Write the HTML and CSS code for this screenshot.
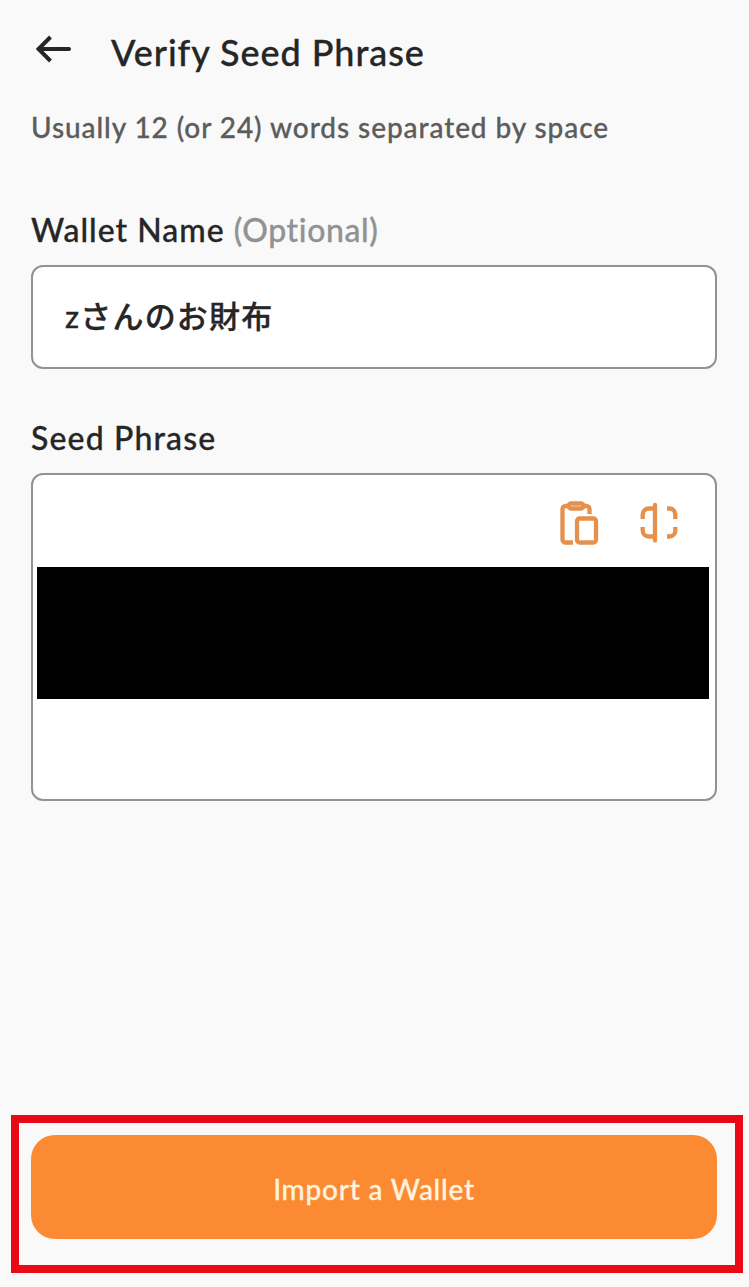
FILE: index.html
```html
<!DOCTYPE html>
<html lang="en">
<head>
  <meta charset="UTF-8">
  <title>Verify Seed Phrase</title>
  <link rel="stylesheet" href="styles.css">
</head>
<body>
  <header class="header">
    <svg class="back" width="36" height="30" viewBox="0 0 36 30">
      <path d="M33 15H3" stroke-linecap="round" />
      <path d="M14.500 3L2.500 15l12 12" />
    </svg>
    <h1 class="title">Verify Seed Phrase</h1>
  </header>
  <p class="hint">Usually 12 (or 24) words separated by space</p>

  <form class="form">
    <label class="label">Wallet Name <span class="optional">(Optional)</span></label>
    <div class="field">zさんのお財布</div>

    <label class="label seed-label">Seed Phrase</label>
    <div class="seed-box">
      <div class="tools">
        <svg class="icon" width="40" height="46" viewBox="0 0 40 46">
          <path d="M8 5H6.500a3 3 0 0 0-3 3v30.500a3 3 0 0 0 3 3H14M24 5h3.500a3 3 0 0 1 3 3v5" />
          <rect x="9.500" y="2.500" width="15" height="5" rx="2.500" />
          <rect x="18" y="17.500" width="19" height="24" rx="2.500" />
        </svg>
        <svg class="icon" width="40" height="42" viewBox="0 0 40 42">
          <path d="M17 4v35.500" stroke-linecap="round" />
          <path d="M17 7.500h-6.300a6 6 0 0 0-6 6V18M4.700 26v3.500a6 6 0 0 0 6 6H17M29 7.500h2.300a6 6 0 0 1 6 6V18M37.300 26v3.500a6 6 0 0 1-6 6H29" />
        </svg>
      </div>
      <div class="redacted"></div>
    </div>

    <div class="highlight">
      <button class="import" type="button">Import a Wallet</button>
    </div>
  </form>
</body>
</html>
```

FILE: styles.css
```css
* {
  box-sizing: border-box;
}
body {
  display: flex;
  flex-direction: column;
  height: 1287px;
  margin: 0;
  padding: 32px 32px 14px 31px;
  background-color: #f9f9f9;
  color: #262626;
  font-family: Lato, "Noto Sans CJK JP", sans-serif;
  font-weight: 500;
  -webkit-text-stroke: 0.3px;
}
.header {
  display: flex;
  align-items: center;
  height: 40px;
}
.back {
  margin: -6px 39px 0 5px;
  fill: none;
  stroke: #262626;
  stroke-width: 4;
}
.title {
  margin: 0;
  font-size: 36px;
  font-weight: 500;
  line-height: 40px;
  letter-spacing: 0.95px;
}
.hint {
  margin: 35px 0 0;
  color: #5c5c5c;
  font-size: 28px;
  line-height: 40px;
  letter-spacing: 0.92px;
}
.form {
  display: flex;
  flex: 1;
  flex-direction: column;
  margin-top: 63px;
}
.label {
  font-size: 32px;
  line-height: 40px;
  letter-spacing: 1px;
  white-space: nowrap;
}
.optional {
  color: #929292;
  letter-spacing: 0.6px;
}
.field {
  height: 104px;
  margin-top: 15px;
  padding: 0 32px;
  border: 2px solid #929292;
  border-radius: 12px;
  background: white;
  font-size: 31px;
  line-height: 98px;
  letter-spacing: 1.2px;
}
.seed-label {
  margin-top: 49px;
  letter-spacing: 1.15px;
}
.seed-box {
  height: 328px;
  margin-top: 15px;
  padding: 26px 6px 0 4px;
  border: 2px solid #929292;
  border-radius: 12px;
  background: white;
}
.tools {
  display: flex;
  justify-content: flex-end;
  gap: 39px;
  height: 66px;
  padding-right: 31px;
}
.icon {
  fill: none;
  stroke: #e5914d;
  stroke-width: 4.3;
}
.redacted {
  height: 132px;
  background: black;
}
.highlight {
  margin: auto -26px 0 -20px;
  height: 158px;
  padding: 12px 18px 0 12px;
  border: 8px solid #ea0a17;
}
.import {
  display: block;
  width: 100%;
  height: 104px;
  padding: 5px 0 0;
  border: none;
  border-radius: 24px;
  background-color: #fb8a33;
  color: #fff3df;
  font-family: Lato, sans-serif;
  font-size: 28px;
  font-weight: 500;
  letter-spacing: 0.75px;
  line-height: 99px;
  cursor: pointer;
}
```
